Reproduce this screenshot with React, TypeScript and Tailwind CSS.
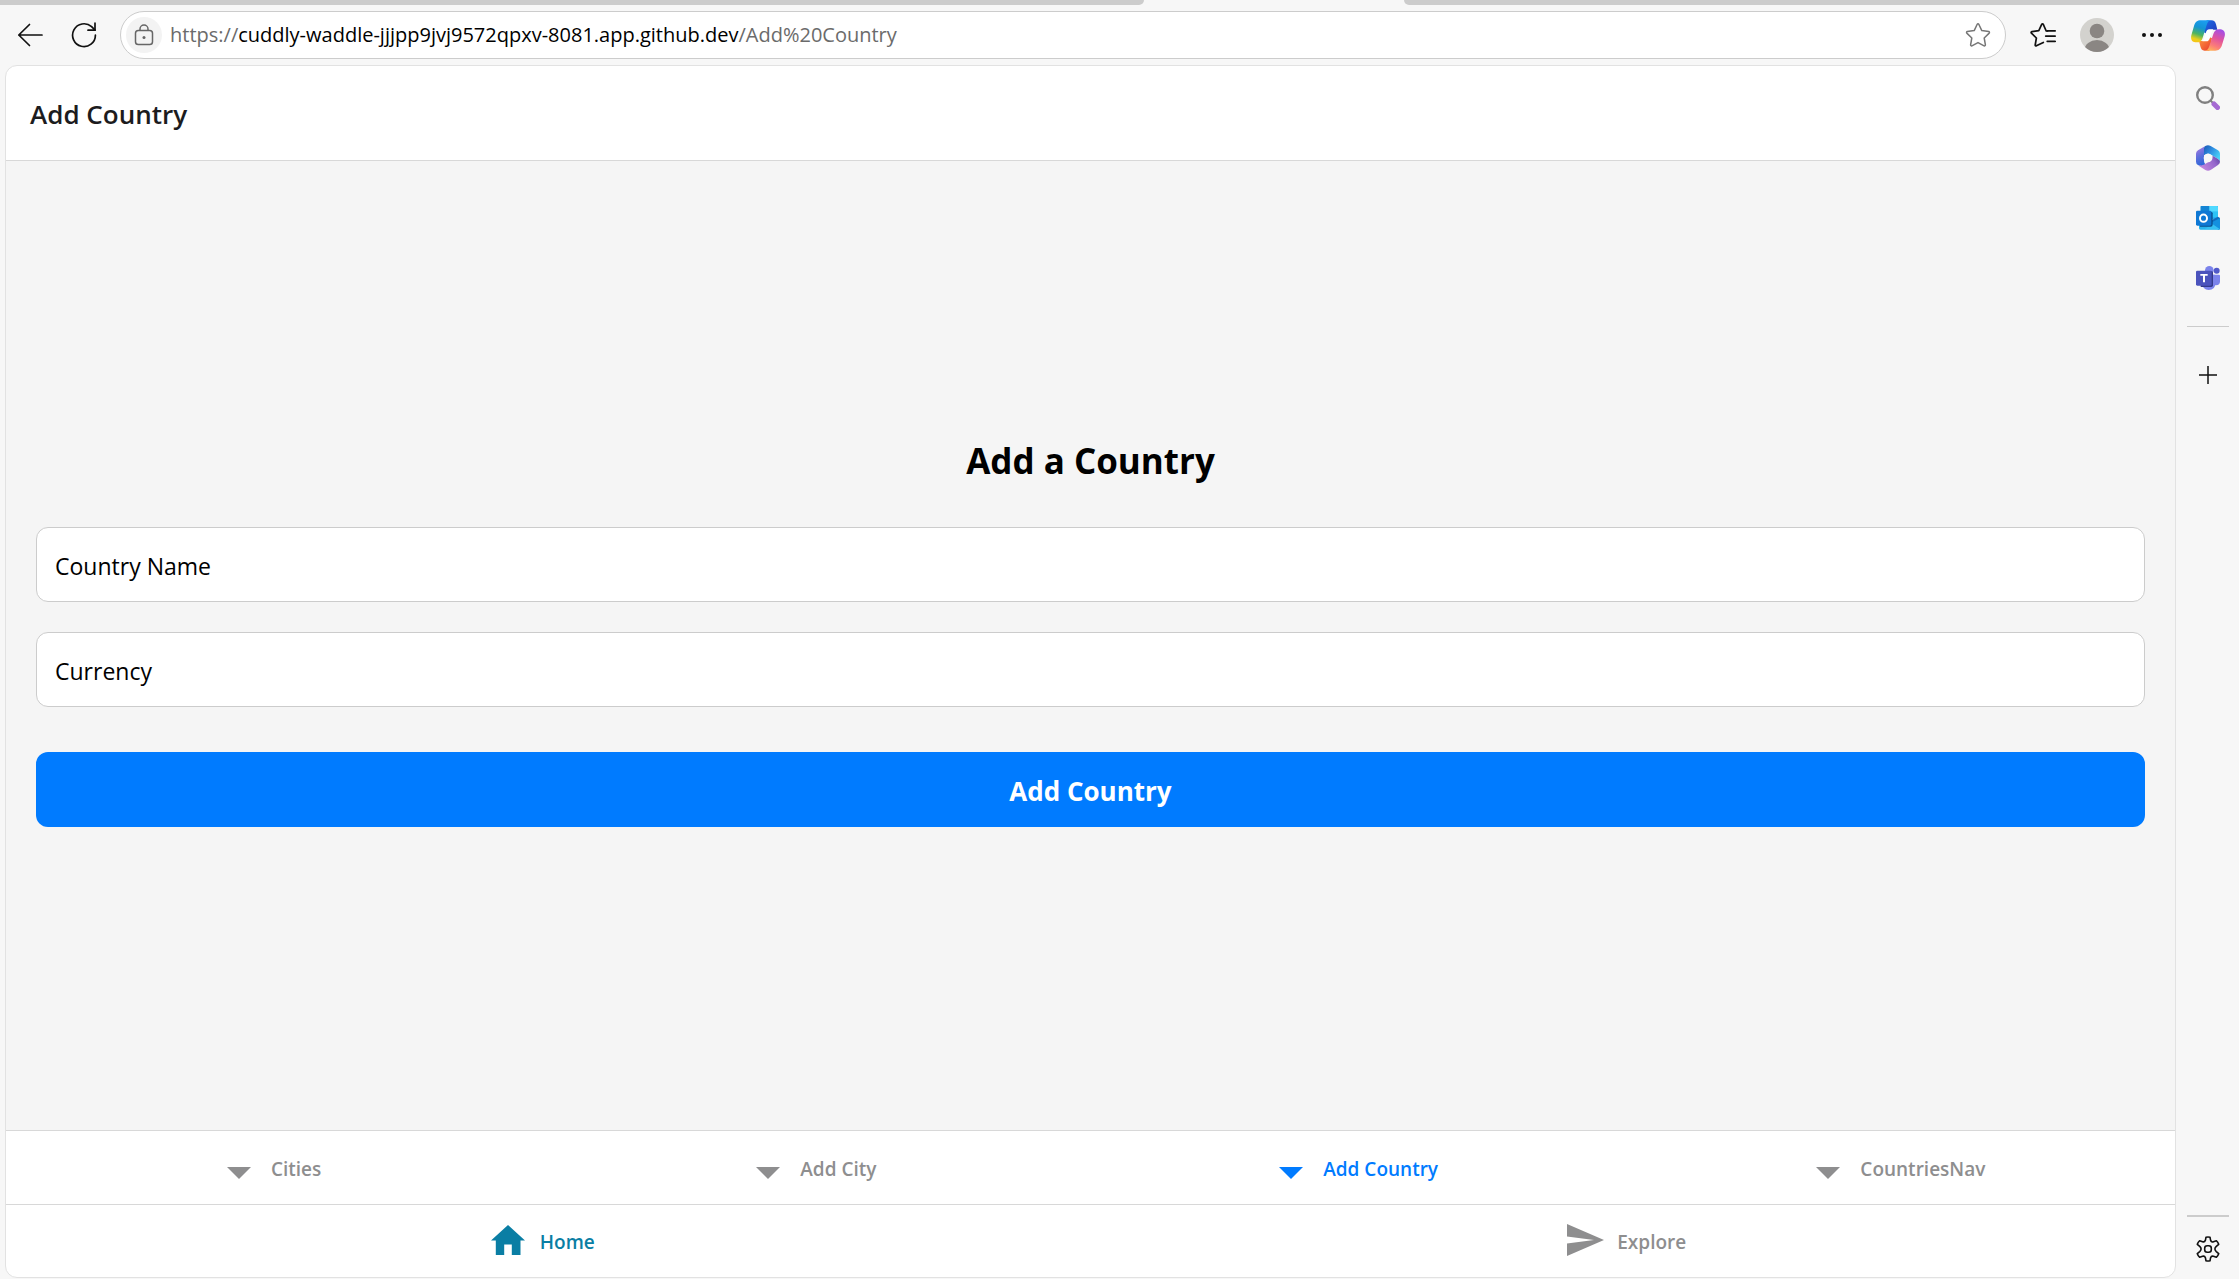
import type { ReactNode } from 'react';

function BackIcon() {
  return (
    <svg width="26" height="24" viewBox="0 0 26 24" fill="none" stroke="#111" strokeWidth="1.7" strokeLinecap="round" strokeLinejoin="round">
      <path d="M12.5 1.5 1.8 12l10.700 10.500M1.800 12H25" />
    </svg>
  );
}

function RefreshIcon() {
  return (
    <svg width="26" height="26" viewBox="0 0 26 26" fill="none" stroke="#111" strokeWidth="1.7" strokeLinecap="round" strokeLinejoin="round">
      <path d="M24.4 13.2A11.4 11.4 0 1 1 20.6 4.7L24 8.2" />
      <path d="M24 1.2v7h-7" />
    </svg>
  );
}

function LockIcon() {
  return (
    <svg width="20" height="22" viewBox="0 0 20 22" fill="none" stroke="#666" strokeWidth="1.5">
      <rect x="1.5" y="6.5" width="17" height="14" rx="2.8" />
      <path d="M6 6.5V5a4 4 0 0 1 8 0v1.500" />
      <circle cx="10" cy="13.500" r="1.500" fill="#666" stroke="none" />
    </svg>
  );
}

function StarIcon() {
  return (
    <svg width="26" height="26" viewBox="0 0 26 26" fill="none" stroke="#767676" strokeWidth="1.5" strokeLinejoin="round">
      <path d="M12.200 2.300a.9.9 0 0 1 1.600 0l3 6.300 6.900 1a.9.9 0 0 1 .5 1.500l-5 4.900 1.200 6.900a.9.9 0 0 1-1.300.9L13 20.600l-6.100 3.200a.9.9 0 0 1-1.300-.9L6.800 16l-5-4.900a.9.9 0 0 1 .5-1.500l6.900-1z" />
    </svg>
  );
}

function FavoritesIcon() {
  return (
    <svg width="26" height="26" viewBox="0 0 26 26" fill="none" stroke="#111" strokeWidth="1.700" strokeLinejoin="round" strokeLinecap="round">
      <path d="M17.500 9H16.200L13.300 2.300a.9.9 0 0 0-1.600 0L8.800 8.700l-7 1a.8.8 0 0 0-.4 1.400l5 4.900-1.200 7a.8.8 0 0 0 1.200.8l6.900-3.400" />
      <path d="M17.200 8.900h8M15.700 14.100h9.500M17.200 19.300h8" />
    </svg>
  );
}

function Avatar() {
  return (
    <svg width="34" height="34" viewBox="0 0 34 34">
      <defs>
        <clipPath id="avatar-clip"><circle cx="17" cy="17" r="17" /></clipPath>
      </defs>
      <g clipPath="url(#avatar-clip)">
        <rect width="34" height="34" fill="#d3d2ce" />
        <circle cx="17" cy="13" r="7.300" fill="#8a8683" />
        <ellipse cx="17" cy="32" rx="12.500" ry="10" fill="#8a8683" />
      </g>
    </svg>
  );
}

function CopilotIcon() {
  return (
    <svg width="34" height="31" viewBox="783 59 102 93">
      <defs>
        <linearGradient id="cp-left" x1="0.6" y1="0" x2="0.3" y2="1">
          <stop offset="0" stopColor="#1b9df0" />
          <stop offset="0.35" stopColor="#1494d4" />
          <stop offset="0.65" stopColor="#4fb45f" />
          <stop offset="0.88" stopColor="#e8cf1c" />
          <stop offset="1" stopColor="#f6c516" />
        </linearGradient>
        <linearGradient id="cp-right" x1="0.7" y1="0" x2="0.3" y2="1">
          <stop offset="0" stopColor="#a44ee6" />
          <stop offset="0.4" stopColor="#e0539f" />
          <stop offset="0.75" stopColor="#fb7c79" />
          <stop offset="1" stopColor="#ffb25a" />
        </linearGradient>
        <linearGradient id="cp-top" x1="0" y1="0" x2="1" y2="1">
          <stop offset="0" stopColor="#1a6fe8" />
          <stop offset="1" stopColor="#2335b8" />
        </linearGradient>
        <linearGradient id="cp-bottom" x1="0" y1="0" x2="1" y2="1">
          <stop offset="0" stopColor="#ff9b3d" />
          <stop offset="1" stopColor="#e8382e" />
        </linearGradient>
      </defs>
      <path d="M830 60h14c8 0 12 4 14 12l4 16h-14c-8 0-14 4-18 12l-8-4z" fill="url(#cp-top)" />
      <path d="M838 151h-14c-8 0-11-5-13-13l-4-16h14c8 0 13-4 17-12l8 4z" fill="url(#cp-bottom)" />
      <path d="M812 60h32c-8 0-11 5-14 14l-12 38c-3 10-8 14-18 14-13 0-19-8-16-21l8-28c4-12 10-17 20-17z" fill="url(#cp-left)" />
      <path d="M856 151h-32c8 0 11-5 14-14l12-36c3-9 8-14 18-14 13 0 19 8 16 21l-8 26c-4 12-10 17-20 17z" fill="url(#cp-right)" />
      <path d="M838 87h12c-3 3-4 7-6 12l-4 13c-2 7-6 11-11 11h-12c3-3 4-7 6-12l4-12c2-8 5-12 11-12z" fill="#fff" />
    </svg>
  );
}

function SearchIcon() {
  return (
    <svg width="24" height="24" viewBox="0 0 24 24" fill="none">
      <circle cx="9" cy="9" r="7.800" stroke="#808080" strokeWidth="2.400" />
      <path d="m14.500 14.500 3 3" stroke="#808080" strokeWidth="2" />
      <path d="m18 18 3.500 3.500" stroke="#a56ad2" strokeWidth="5" strokeLinecap="round" />
    </svg>
  );
}

function Microsoft365Icon() {
  return (
    <svg width="24" height="26" viewBox="0 0 72 78">
      <defs>
        <linearGradient id="m-left" x1="0" y1="0" x2="0.300" y2="1">
          <stop offset="0" stopColor="#b57be0" />
          <stop offset="0.55" stopColor="#5f6fdc" />
          <stop offset="1" stopColor="#2f67d8" />
        </linearGradient>
        <linearGradient id="m-top" x1="0" y1="0" x2="1" y2="0.700">
          <stop offset="0" stopColor="#1a56b4" />
          <stop offset="0.5" stopColor="#2f93e4" />
          <stop offset="1" stopColor="#4bd6f8" />
        </linearGradient>
        <linearGradient id="m-bottom" x1="0" y1="0.500" x2="1" y2="0">
          <stop offset="0" stopColor="#c184dd" />
          <stop offset="0.6" stopColor="#9567cc" />
          <stop offset="1" stopColor="#5a3f9e" />
        </linearGradient>
      </defs>
      <path d="M28 3 6 16q-6 4-6 10v24q0 7 6 10l8 4 16-5q-6-3-6-11V10q0-5 4-7z" fill="url(#m-left)" />
      <path d="M28 3q8-5 16 0l22 13q6 4 6 10v24q-1-6-7-9L43 28q-6-4-12-1l-7 4V10q0-5 4-7z" fill="url(#m-top)" />
      <path d="M14 61q6 1 12-3l22-14 2-12 15 9q7 4 7 9 0 6-6 10L44 75q-8 5-16 0L8 62q3 1 6-1z" fill="url(#m-bottom)" />
      <circle cx="36" cy="39" r="13" fill="#f7f7f7" />
    </svg>
  );
}

function OutlookIcon() {
  return (
    <svg width="24" height="24" viewBox="0 0 72 72">
      <path d="M14 0h52v40H14z" fill="#28a8ea" />
      <path d="M14 3q0-3 3-3h23v17H14z" fill="#1384d4" />
      <path d="M40 0h23q3 0 3 3v14H40z" fill="#50d9ff" />
      <path d="M40 17h26v17H40z" fill="#2cc3f6" />
      <path d="M66 32 72 36v32L40 46z" fill="#0f6cbd" />
      <path d="M9 36 72 69q-1 2-4 2H13q-4 0-4-4z" fill="#28b4ee" />
      <path d="M72 36v32q0 3-4 3L38 54z" fill="#1490df" />
      <path d="M44 50 72 70H14q20 2 30-20z" fill="#35c0f2" />
      <path d="M12 17h33q5 0 5 5v34q0 6-6 6H12z" fill="#0a4f8f" />
      <rect y="14" width="46" height="45" rx="4" fill="#0f78d4" />
      <ellipse cx="22.500" cy="36.500" rx="10.500" ry="11" fill="none" stroke="#fff" strokeWidth="6" />
    </svg>
  );
}

function TeamsIcon() {
  return (
    <svg width="24" height="24" viewBox="0 0 72 72">
      <circle cx="62" cy="14" r="9" fill="#5059c9" />
      <path d="M50 26h19q3 0 3 3v17q0 12-12 12-10 0-12-8z" fill="#7b83eb" />
      <circle cx="40" cy="13" r="13" fill="#7b83eb" />
      <path d="M21 26h34q3 0 3 3v22q0 21-20 21-18 0-20-20z" fill="#7b83eb" />
      <path d="M14 16h33q4 0 4 4v38q0 5-5 5H14z" fill="#343a8c" />
      <rect y="14" width="47" height="45" rx="4" fill="#4b53bc" />
      <path d="M13 24h22v5.500h-8V49h-6V29.500h-8z" fill="#fff" />
    </svg>
  );
}

function PlusIcon() {
  return (
    <svg width="18" height="18" viewBox="0 0 18 18" stroke="#111" strokeWidth="1.500">
      <path d="M9 0v18M0 9h18" />
    </svg>
  );
}

function GearIcon() {
  return (
    <svg width="26" height="26" viewBox="0 0 26 26" fill="none" stroke="#111" strokeWidth="1.600" strokeLinejoin="round">
      <path d="M11 1.200q2-.5 4 0l.6 3.100q.3 1.300 1.600 1.600.6.200 1.200-.1l3-1.100q1.600 1.600 2.300 3.600l-2.400 2.100q-1.400 1.300-1.400 2.600t1.400 2.600l2.400 2.100q-.7 2-2.300 3.600l-3-1.100q-2.100-.6-2.800 1.500l-.6 3.100q-2 .5-4 0l-.6-3.100q-.7-2.100-2.800-1.500l-3 1.100Q3 19.700 2.300 17.700l2.400-2.100q1.400-1.300 1.400-2.600t-1.400-2.600L2.300 8.300Q3 6.300 4.600 4.700l3 1.100q2.100.6 2.800-1.500z" />
      <rect x="9.700" y="9.700" width="6.600" height="6.600" rx="2.500" />
    </svg>
  );
}

function TriangleIcon() {
  return (
    <svg width="24" height="12" viewBox="0 0 24 12" fill="currentColor" className="mt-2">
      <path d="M0 0h24L12 12z" />
    </svg>
  );
}

function HomeIcon() {
  return (
    <svg width="34" height="30" viewBox="0 0 34 30" fill="currentColor" className="-mt-1 shrink-0">
      <path d="M17 0 34 15.500H29.500V30H20.800V19.500H13.200V30H4.800V15.500H0z" />
    </svg>
  );
}

function SendIcon() {
  return (
    <svg width="37" height="32" viewBox="0 0 37 32" fill="currentColor" className="-mt-1 shrink-0">
      <path d="M0 0 37 16 0 32V19.500L27 16 0 12.500z" />
    </svg>
  );
}

function TabLink({ label, icon, color, href }: { label: string; icon: ReactNode; color: string; href: string }) {
  return (
    <a href={href} className={`flex flex-1 items-center justify-center gap-3.5 pt-0.5 pr-3 text-[19px] leading-7 font-semibold ${color}`}>
      <span className="flex w-9 justify-center">{icon}</span>
      <span>{label}</span>
    </a>
  );
}

function Field({ label, id }: { label: string; id: string }) {
  return (
    <input
      id={id}
      aria-label={label}
      placeholder={label}
      className="h-[75px] w-full rounded-xl border border-[#ccc] bg-white px-[18px] pt-1 text-[23px] text-black placeholder:text-black"
    />
  );
}

function SideButton({ label, children }: { label: string; children: ReactNode }) {
  return (
    <button aria-label={label} className="flex h-[60px] w-full items-center justify-center">
      {children}
    </button>
  );
}

export default function App() {
  return (
    <div className="flex min-h-screen flex-col bg-[#f7f7f7] font-['Open_Sans','Noto_Sans',sans-serif]">
      <div className="flex h-[5px]">
        <div className="w-[51.1%] rounded-br-lg bg-[#ccc]" />
        <div className="w-[11.6%]" />
        <div className="flex-1 rounded-bl-lg bg-[#ccc]" />
      </div>
      <div className="flex flex-1">
        <div className="flex flex-1 flex-col pb-px pl-[5px]">
          <header className="flex h-[60px] items-center pr-3.5">
            <button aria-label="Back" className="ml-3"><BackIcon /></button>
            <button aria-label="Refresh" className="ml-7"><RefreshIcon /></button>
            <div className="ml-[23px] flex h-12 flex-1 items-center rounded-full border border-[#ccc] bg-white pr-3.5 pl-[5px]">
              <button aria-label="Site information" className="flex size-9 items-center justify-center rounded-full bg-[#f3f3f3]">
                <LockIcon />
              </button>
              <div className="ml-2 flex-1 text-[20px] leading-7 text-[#6b6b6b]">
                https://<span className="text-black">cuddly-waddle-jjjpp9jvj9572qpxv-8081.app.github.dev</span>/Add%20Country
              </div>
              <button aria-label="Add to favorites"><StarIcon /></button>
            </div>
            <button aria-label="Favorites" className="ml-6"><FavoritesIcon /></button>
            <button aria-label="Profile" className="ml-6"><Avatar /></button>
            <button aria-label="More" className="ml-7 flex gap-1 p-0">
              <span className="size-1 rounded-full bg-[#111]" />
              <span className="size-1 rounded-full bg-[#111]" />
              <span className="size-1 rounded-full bg-[#111]" />
            </button>
          </header>

          <div className="flex flex-1 flex-col overflow-hidden rounded-xl border border-[#e2e2e2] bg-white">
            <div className="flex h-[95px] items-center border-b border-[#d8d8d8] px-6 pt-0.5">
              <h1 className="text-[26px] font-semibold text-[#1c1c1e]">Add Country</h1>
            </div>
            <main className="flex flex-1 flex-col justify-center bg-[#f5f5f5] px-[30px] pb-[30px]">
              <h2 className="mb-10 text-center text-[35px] leading-[52px] font-bold text-black">Add a Country</h2>
              <form className="flex flex-col" onSubmit={(e) => e.preventDefault()}>
                <div className="flex flex-col gap-[30px]">
                  <Field id="country-name" label="Country Name" />
                  <Field id="currency" label="Currency" />
                </div>
                <button type="submit" className="mt-[45px] h-[75px] rounded-xl bg-[#007bff] pt-1 text-[26px] font-bold text-white">
                  Add Country
                </button>
              </form>
            </main>
            <nav aria-label="Sections" className="flex h-[74px] border-t border-[#d8d8d8]">
              <TabLink href="#cities" label="Cities" color="text-[#8e8e8f]" icon={<TriangleIcon />} />
              <TabLink href="#add-city" label="Add City" color="text-[#8e8e8f]" icon={<TriangleIcon />} />
              <TabLink href="#add-country" label="Add Country" color="text-[#007bff]" icon={<TriangleIcon />} />
              <TabLink href="#countries" label="CountriesNav" color="text-[#8e8e8f]" icon={<TriangleIcon />} />
            </nav>
            <nav aria-label="Main" className="flex h-[73px] border-t border-[#d8d8d8]">
              <TabLink href="#home" label="Home" color="text-[#0a7ea4]" icon={<HomeIcon />} />
              <TabLink href="#explore" label="Explore" color="text-[#8e8e8f]" icon={<SendIcon />} />
            </nav>
          </div>
        </div>

        <aside className="flex w-[63px] flex-col items-center">
          <div className="mb-[3px] w-full"><SideButton label="Copilot"><CopilotIcon /></SideButton></div>
          <SideButton label="Search"><SearchIcon /></SideButton>
          <SideButton label="Microsoft 365"><Microsoft365Icon /></SideButton>
          <SideButton label="Outlook"><OutlookIcon /></SideButton>
          <SideButton label="Teams"><TeamsIcon /></SideButton>
          <div className="mt-[18px] h-px w-[42px] bg-[#ccc]" />
          <div className="mt-[18px] w-full"><SideButton label="Customize"><PlusIcon /></SideButton></div>
          <div className="mt-auto h-0.5 w-[42px] bg-[#ccc]" />
          <div className="w-full pt-0.5"><SideButton label="Settings"><GearIcon /></SideButton></div>
        </aside>
      </div>
    </div>
  );
}
